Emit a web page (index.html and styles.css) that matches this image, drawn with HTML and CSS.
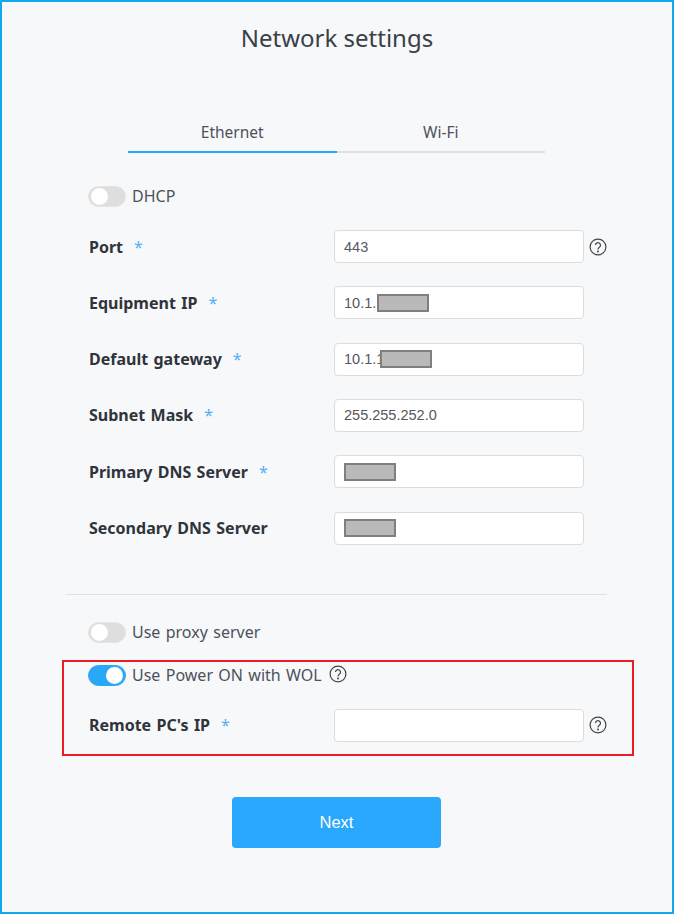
FILE: index.html
```html
<!DOCTYPE html>
<html lang="en">
<head>
<meta charset="utf-8">
<title>Network settings</title>
<link rel="stylesheet" href="styles.css">
</head>
<body>
<main class="frame">
  <h1 class="title">Network settings</h1>
  <div class="tabs">
    <div class="tab tab-active">Ethernet</div>
    <div class="tab">Wi-Fi</div>
  </div>
  <div class="switch-row switch-dhcp">
    <span class="toggle"><span class="knob"></span></span>
    <span class="switch-label">DHCP</span>
  </div>
  <div class="rows">
    <div class="row">
      <div class="label">Port<span class="req">*</span></div>
      <div class="field">443</div>
      <svg class="help" viewBox="0 0 18 18"><circle cx="9" cy="9" r="7.9"/><path d="M6.5 7.1a2.5 2.5 0 1 1 3.9 2.1c-.9.6-1.4 1-1.4 2.2"/><circle class="dot" cx="9" cy="13.5" r="1"/></svg>
    </div>
    <div class="row">
      <div class="label">Equipment IP<span class="req">*</span></div>
      <div class="field">10.1.<span class="redact redact-a"></span></div>
    </div>
    <div class="row">
      <div class="label">Default gateway<span class="req">*</span></div>
      <div class="field">10.1.1<span class="redact redact-b"></span></div>
    </div>
    <div class="row">
      <div class="label">Subnet Mask<span class="req">*</span></div>
      <div class="field">255.255.252.0</div>
    </div>
    <div class="row">
      <div class="label">Primary DNS Server<span class="req">*</span></div>
      <div class="field"><span class="redact"></span></div>
    </div>
    <div class="row">
      <div class="label">Secondary DNS Server</div>
      <div class="field"><span class="redact"></span></div>
    </div>
  </div>
  <hr class="divider">
  <div class="switch-row switch-proxy">
    <span class="toggle"><span class="knob"></span></span>
    <span class="switch-label">Use proxy server</span>
  </div>
  <section class="callout">
    <div class="switch-row switch-wol">
      <span class="toggle toggle-on"><span class="knob"></span></span>
      <span class="switch-label">Use Power ON with WOL</span>
      <svg class="help help-inline" viewBox="0 0 18 18"><circle cx="9" cy="9" r="7.9"/><path d="M6.5 7.1a2.5 2.5 0 1 1 3.9 2.1c-.9.6-1.4 1-1.4 2.2"/><circle class="dot" cx="9" cy="13.5" r="1"/></svg>
    </div>
    <div class="row row-remote">
      <div class="label">Remote PC's IP<span class="req">*</span></div>
      <div class="field"></div>
      <svg class="help" viewBox="0 0 18 18"><circle cx="9" cy="9" r="7.9"/><path d="M6.5 7.1a2.5 2.5 0 1 1 3.9 2.1c-.9.6-1.4 1-1.4 2.2"/><circle class="dot" cx="9" cy="13.5" r="1"/></svg>
    </div>
  </section>
  <button class="next" type="button">Next</button>
</main>
</body>
</html>
```
FILE: styles.css
```css
* { box-sizing: border-box; }
html, body { margin: 0; padding: 0; }
body {
  width: 674px;
  height: 914px;
  overflow: hidden;
  font-family: "Noto Sans", "Open Sans", sans-serif;
  color: #33383f;
}
.frame {
  width: 674px;
  height: 914px;
  border: 2px solid #10aaec;
  background: #f7f8fa;
  display: flex;
  flex-direction: column;
}
.title {
  margin: 18px 0 0;
  font-size: 24px;
  font-weight: 400;
  line-height: 36px;
  text-align: center;
  color: #3a4048;
}
.tabs {
  display: flex;
  width: 417px;
  margin: 63px 0 0 126px;
}
.tab {
  width: 50%;
  height: 34px;
  font-size: 15.5px;
  line-height: 27px;
  text-align: center;
  color: #4c525a;
  border-bottom: 2px solid #dcdfe4;
}
.tab-active { border-bottom-color: #2aa8f8; }
.switch-row {
  display: flex;
  align-items: center;
  height: 21px;
  margin-left: 86px;
}
.switch-dhcp { margin-top: 33px; }
.switch-proxy { margin-top: 27px; }
.switch-wol { margin-left: 0; }
.switch-label {
  margin-left: 6px;
  font-size: 16px;
  word-spacing: 1.2px;
  line-height: 23px;
  color: #4c525a;
}
.toggle {
  width: 38px;
  height: 21px;
  flex: none;
  border-radius: 11px;
  background: #dedede;
  border: 1px solid #e4e4e4;
  display: flex;
  align-items: center;
  padding-left: 2px;
}
.knob {
  width: 17px;
  height: 17px;
  border-radius: 50%;
  background: #fff;
}
.toggle-on {
  background: #2aa8f8;
  border-color: #2aa8f8;
  justify-content: flex-end;
  padding: 0 2px 0 0;
}
.rows {
  display: flex;
  flex-direction: column;
  gap: 23.33px;
  margin: 23px 0 0 87px;
}
.row {
  display: flex;
  align-items: center;
  height: 33px;
}
.label {
  width: 245px;
  flex: none;
  font-size: 16px;
  word-spacing: 1.2px;
  font-weight: 700;
  color: #2f343a;
}
.req {
  margin-left: 11px;
  font-weight: 400;
  color: #55aef5;
}
.field {
  width: 250px;
  height: 33px;
  flex: none;
  display: flex;
  align-items: center;
  padding-left: 9px;
  background: #fff;
  border: 1px solid #dcdcdc;
  border-radius: 4px;
  font-family: "Liberation Sans", Arial, sans-serif;
  font-size: 14.5px;
  color: #54585e;
}
.redact {
  width: 52px;
  height: 18px;
  background: #b9b9b9;
  border: 2px solid #7f7f7f;
}
.redact-a { margin-left: 1px; }
.redact-b { margin-left: -4px; }
.help {
  width: 18px;
  height: 18px;
  flex: none;
  margin-left: 5px;
  fill: none;
  stroke: #444;
  stroke-width: 1.2;
}
.help .dot { fill: #444; stroke: none; }
.help-inline { margin: -3px 0 0 7px; }
.divider {
  width: 541px;
  height: 1px;
  margin: 49px 0 0 64px;
  border: 0;
  background: #dfe1e5;
}
.callout {
  width: 572px;
  height: 96px;
  margin: 17px 0 0 60px;
  padding: 3px 0 0 24px;
  border: 2px solid #ec1c24;
}
.row-remote { margin: 23px 0 0 1px; }
.next {
  width: 209px;
  height: 51px;
  margin: 41px 0 0 230px;
  border: 0;
  border-radius: 4px;
  background: #2aa8fd;
  color: #fff;
  font-family: "Liberation Sans", Arial, sans-serif;
  font-size: 16.5px;
  font-weight: 400;
}
```
